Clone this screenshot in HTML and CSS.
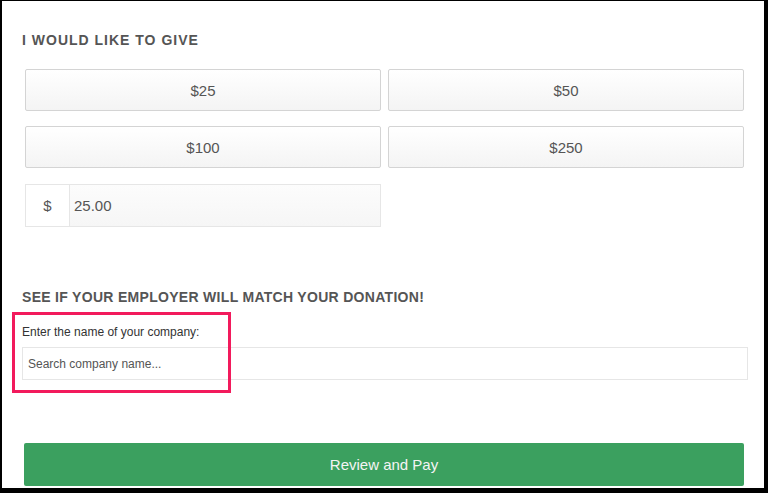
FILE: index.html
```html
<!doctype html>
<html lang="en">
<head>
  <title>Donate</title>
  <meta charset="utf-8">
  <link rel="stylesheet" href="styles.css">
</head>
<body>

  <div class="frame">
    <div class="donate">
      <!-- amount -->
      <h2 class="title">I WOULD LIKE TO GIVE</h2>

      <div class="amounts">
        <button class="amount">$25</button>
        <button class="amount">$50</button>
        <button class="amount">$100</button>
        <button class="amount">$250</button>
        <div class="custom">
          <span class="addon">$</span>
          <input type="text" class="custom-input" value="25.00">
        </div>
      </div>

      <!-- employer match -->
      <h2 class="title title--match">SEE IF YOUR EMPLOYER WILL MATCH YOUR DONATION!</h2>
      <div class="match">
        <label class="label">Enter the name of your company:</label>
        <input type="text" class="search" placeholder="Search company name...">
        <div class="highlight"></div>
      </div>

      <button class="pay">Review and Pay</button>
    </div>
  </div>

</body>
</html>
```

FILE: styles.css
```css
body {
  margin: 0px;
  padding: 0px;
  background-color: black;
  font-family: 'Liberation Sans', Arial, sans-serif;
}
.frame {
  box-sizing: border-box;
  width: 768px;
  height: 493px;
  background-color: white;
  border-style: solid;
  border-color: black;
  border-width: 1px 4px 5px 2px;
}
.donate {
  padding: 30px 0 0 20px;
  width: 726px;
}
.title {
  margin: 0;
  font-size: 14px;
  line-height: 18px;
  font-weight: 700;
  letter-spacing: 1px;
  color: #555;
}
.amounts {
  display: grid;
  grid-template-columns: 356px 356px;
  grid-auto-rows: 42px;
  column-gap: 7px;
  row-gap: 15px;
  margin: 20px 0 0 3px;
}
.amount {
  border: 1px solid #d4d4d4;
  border-radius: 2px;
  background: linear-gradient(#fff, #f4f4f4);
  font: 15px 'Liberation Sans', Arial, sans-serif;
  color: #555;
  cursor: pointer;
}
.amount:focus, .search:focus, .custom-input:focus {
  outline: none;
}
.custom {
  display: flex;
  height: 43px;
  margin-top: 1px;
  border: 1px solid #e6e6e6;
  box-sizing: border-box;
}
.addon {
  width: 43px;
  display: flex;
  align-items: center;
  justify-content: center;
  border-right: 1px solid #e6e6e6;
  font-size: 15px;
  color: #555;
}
.custom-input {
  flex: 1;
  border: none;
  padding: 0 4px;
  background: linear-gradient(#fcfcfc, #f6f6f6);
  font: 15px 'Liberation Sans', Arial, sans-serif;
  color: #555;
}
.title--match {
  margin-top: 63px;
  letter-spacing: 0.3px;
}
.match {
  position: relative;
  margin-top: 19px;
}
.label {
  display: block;
  font-size: 12px;
  line-height: 15px;
  color: #333;
}
.search {
  display: block;
  box-sizing: border-box;
  width: 726px;
  height: 33px;
  margin-top: 7px;
  padding: 0 5px;
  border: 1px solid #e6e6e6;
  font: 12px 'Liberation Sans', Arial, sans-serif;
  color: #555;
}
.search::placeholder {
  color: #555;
}
.highlight {
  position: absolute;
  left: -10px;
  top: -13px;
  width: 219px;
  height: 81px;
  box-sizing: border-box;
  border: 3px solid #f21a5c;
}
.pay {
  display: block;
  width: 720px;
  height: 43px;
  margin: 63px 0 0 2px;
  border: none;
  border-radius: 2px;
  background-color: #3ba05f;
  font: 15px 'Liberation Sans', Arial, sans-serif;
  color: #f4f4f4;
  cursor: pointer;
}
```
